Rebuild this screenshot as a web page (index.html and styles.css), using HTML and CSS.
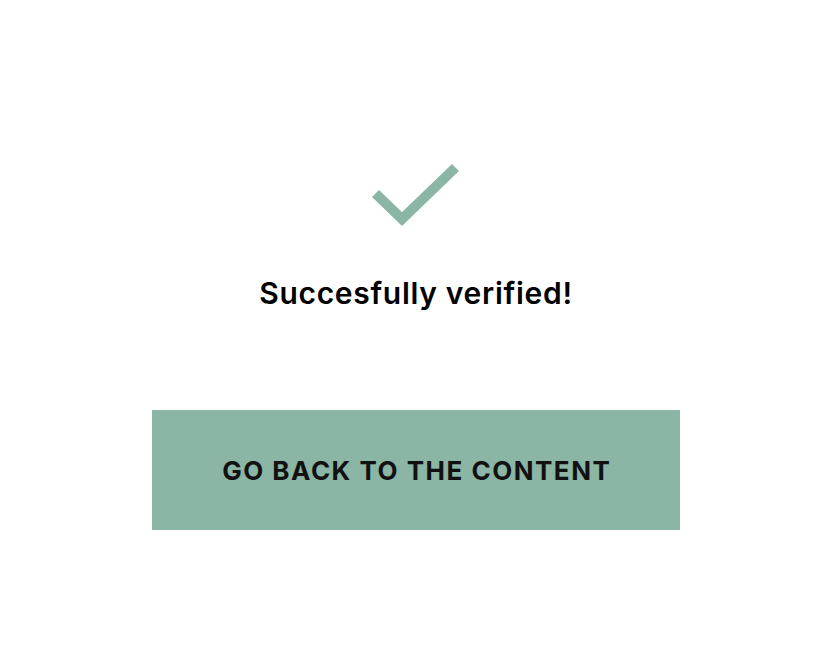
FILE: index.html
```html
<!DOCTYPE html>
<html lang="en">
<head>
<meta charset="utf-8">
<title>Verified</title>
<link rel="stylesheet" href="styles.css">
</head>
<body>
<main class="page">
  <svg class="check" width="90" height="66" viewBox="0 0 90 66" aria-hidden="true">
    <path d="M5.5 31.5 L32 57 L85.5 5.5" fill="none" stroke="#8bb5a4" stroke-width="10" stroke-linejoin="miter" stroke-linecap="butt"/>
  </svg>
  <h1 class="title">Succesfully verified!</h1>
  <a class="btn" href="#"><span class="btn-label">GO BACK TO THE CONTENT</span></a>
</main>
</body>
</html>
```
FILE: styles.css
```css
html, body {
  margin: 0;
  padding: 0;
  background: #ffffff;
}
.page {
  display: flex;
  flex-direction: column;
  align-items: center;
  padding-top: 162px;
  font-family: Inter, "Noto Sans", sans-serif;
}
.check {
  display: block;
  margin-left: -2px;
}
.title {
  margin: 47px 0 0;
  font-size: 30px;
  line-height: 36px;
  font-weight: 600;
  letter-spacing: 0.7px;
  color: #000000;
}
.btn {
  margin-top: 99px;
  width: 528px;
  height: 120px;
  display: flex;
  align-items: center;
  justify-content: center;
  background: #8bb5a4;
  color: #111111;
  text-decoration: none;
  font-size: 26px;
  font-weight: 700;
  letter-spacing: 1.5px;
}
.btn-label {
  margin-right: -1.5px;
}
```
